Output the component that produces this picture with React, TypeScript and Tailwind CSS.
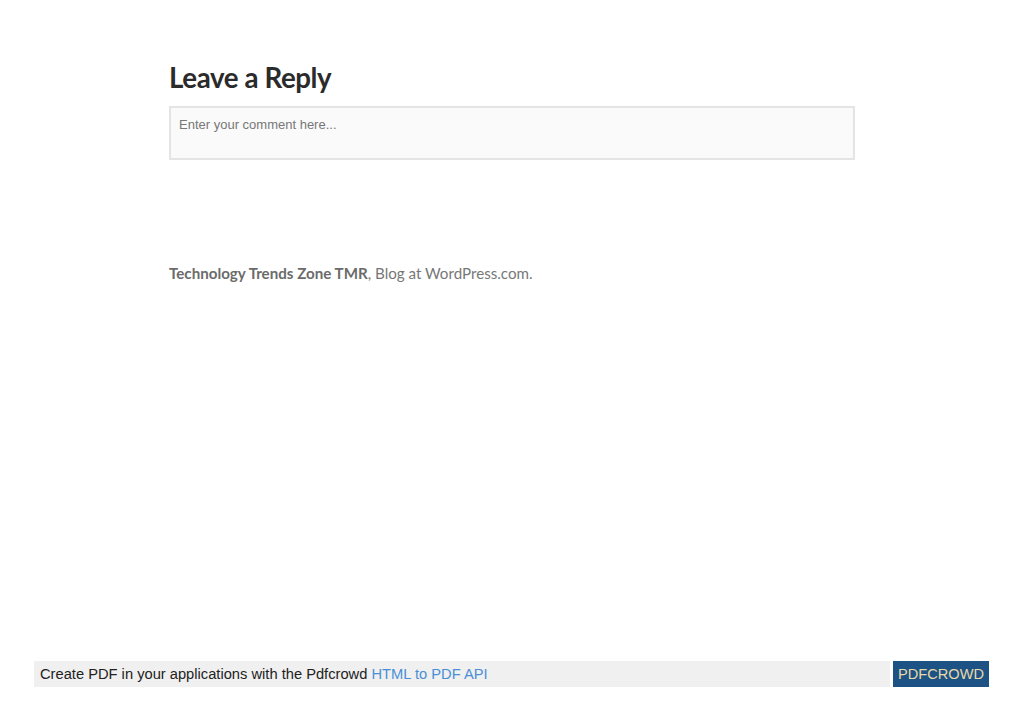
export default function App() {
  return (
    <div className="w-[1023px] h-[724px] bg-white flex flex-col relative overflow-hidden">
      <div className="pl-[169px] pt-[60px] w-[855px]">
        <h3 className="text-[27.7px] leading-[36px] font-bold text-[#2b2b2b] tracking-[-0.4px]" style={{ fontFamily: "Lato, 'Noto Sans', sans-serif" }}>
          Leave a Reply
        </h3>
        <div className="mt-[10px] h-[54px] border-2 border-[#e4e4e4] bg-[#fafafa] px-[8px] pt-[3px]">
          <span className="text-[13px] text-[#777777]" style={{ fontFamily: "'Liberation Sans', Arial, sans-serif" }}>
            Enter your comment here...
          </span>
        </div>
        <div className="mt-[103px] text-[15.15px] leading-[20px] text-[#777777]" style={{ fontFamily: "Lato, 'Noto Sans', sans-serif" }}>
          <span className="font-bold text-[#6b6b6b]">Technology Trends Zone TMR</span>, Blog at WordPress.com.
        </div>
      </div>
      <div className="flex-1" />
      <div className="flex items-center pl-[34px] pr-[34px] mb-[37px]" style={{ fontFamily: "'Liberation Sans', Arial, sans-serif" }}>
        <div className="flex-1 h-[26px] bg-[#f0f0f0] flex items-center pl-[6px] text-[14.7px] text-[#222] pt-[1px]">
          Create PDF in your applications with the Pdfcrowd&nbsp;<span className="text-[#4a8fd6]">HTML to PDF API</span>
        </div>
        <div className="ml-[3px] h-[26px] w-[96px] bg-[#1d5285] text-[#e8d9a8] text-[14.6px] flex items-center justify-center pt-[1px]">
          PDFCROWD
        </div>
      </div>
    </div>
  );
}
